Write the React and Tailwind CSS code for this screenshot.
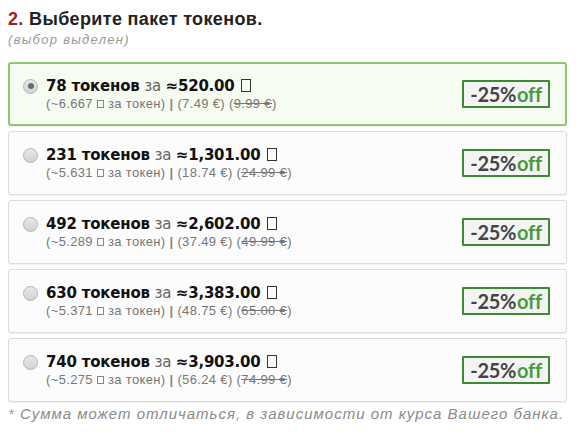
import React from 'react';

const packs = [
  { tokens: 78, price: '520.00', per: '6.667', eur: '7.49', old: '9.99' },
  { tokens: 231, price: '1,301.00', per: '5.631', eur: '18.74', old: '24.99' },
  { tokens: 492, price: '2,602.00', per: '5.289', eur: '37.49', old: '49.99' },
  { tokens: 630, price: '3,383.00', per: '5.371', eur: '48.75', old: '65.00' },
  { tokens: 740, price: '3,903.00', per: '5.275', eur: '56.24', old: '74.99' },
];

// Missing-glyph box, as the currency sign renders in the shot
const Tofu = ({ small }) => (
  <span
    className={
      small
        ? 'inline-block w-[7px] h-[8px] border border-[#888] mx-[4px] align-[0px]'
        : 'inline-block w-[10px] h-[13px] border border-[#333] ml-[6px] align-[-1px]'
    }
  />
);

const PackCard = ({ pack, selected }) => (
  <div
    className={
      'flex items-center justify-between h-[64px] rounded-[3px] shadow-[0_1px_1px_rgba(0,0,0,0.06)] ' +
      (selected
        ? 'border-2 border-[#8dc572] bg-[#f7fcf2] pl-[13px] pr-[15px]'
        : 'border border-[#dcdcdc] bg-[#fcfcfc] pl-[14px] pr-[16px]')
    }
  >
    <div className="flex items-start gap-[8px] -mt-[2px]">
      <span className="mt-[3px] w-[15px] h-[15px] rounded-full border border-[#b5b5b5] bg-gradient-to-b from-[#e8e8e8] to-[#d2d2d2] flex items-center justify-center">
        {selected && <span className="w-[6px] h-[6px] rounded-full bg-[#6a6a6a]" />}
      </span>
      <div className="flex flex-col">
        <div className="text-[15px] leading-[20px] text-[#111] font-['DejaVu_Sans',sans-serif] tracking-[-0.2px]">
          <b>{pack.tokens} токенов</b>
          <span className="text-[#666]"> за </span>
          <b>≈{pack.price}</b>
          <Tofu />
        </div>
        <div className="text-[13px] leading-[15px] text-[#777] tracking-[0.35px]">
          (~{pack.per}
          <Tofu small />
          за токен) <span className="font-bold text-[#8a8a7a]">|</span> ({pack.eur} €){' '}
          (<span className="line-through">{pack.old} €</span>)
        </div>
      </div>
    </div>
    <div className="w-[88px] h-[28px] flex items-center justify-center border-2 border-[#3e8a34] bg-[#f4f4f4] rounded-[1px] font-['Lato',sans-serif] text-[20px] leading-none tracking-[-0.3px]">
      <span className="font-bold text-[#444]">-25%</span>
      <span className="font-bold text-[#4a9a3c] ml-[1px]">off</span>
    </div>
  </div>
);

export default function App() {
  return (
    <div className="w-[586px] h-[445px] bg-white px-[8px] pt-[8px] font-['Liberation_Sans',Arial,sans-serif]">
      <h2 className="text-[18px] leading-[22px] font-bold text-[#222] tracking-[0.35px]">
        <span className="text-[#a01b2e]">2.</span> Выберите пакет токенов.
      </h2>
      <div className="mt-[2px] italic text-[13px] leading-[16px] text-[#9a9a9a] tracking-[1.3px]">(выбор выделен)</div>

      <div className="mt-[14px] w-[559px] flex flex-col gap-[5px]">
        {packs.map((p, i) => (
          <PackCard key={p.tokens} pack={p} selected={i === 0} />
        ))}
      </div>

      <p className="mt-[3px] italic text-[15px] leading-[18px] text-[#8a8a8a] tracking-[1px]">
        <span className="text-[#7aa6d0]">*</span> Сумма может отличаться, в зависимости от курса Вашего банка.
      </p>
    </div>
  );
}
